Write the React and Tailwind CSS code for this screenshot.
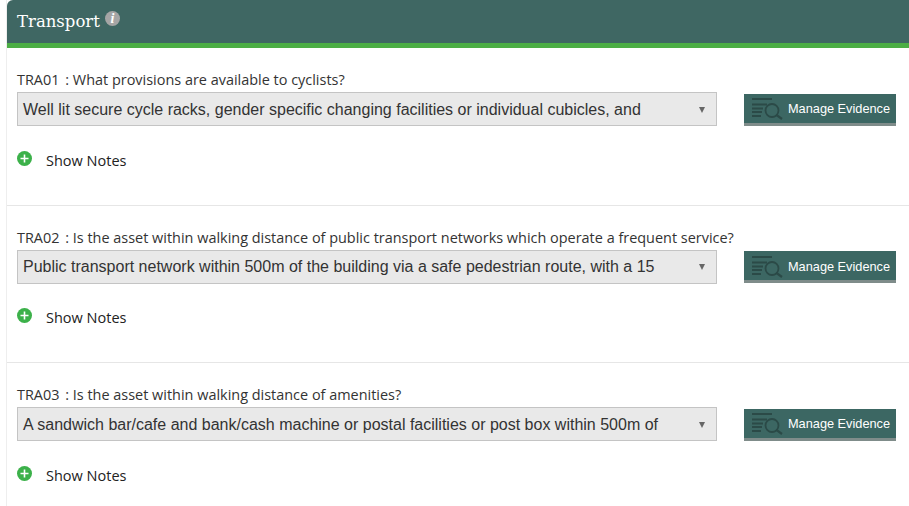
const questions = [
  {
    id: 'TRA01',
    label: 'What provisions are available to cyclists?',
    answer: 'Well lit secure cycle racks, gender specific changing facilities or individual cubicles, and',
  },
  {
    id: 'TRA02',
    label: 'Is the asset within walking distance of public transport networks which operate a frequent service?',
    answer: 'Public transport network within 500m of the building via a safe pedestrian route, with a 15',
  },
  {
    id: 'TRA03',
    label: 'Is the asset within walking distance of amenities?',
    answer: 'A sandwich bar/cafe and bank/cash machine or postal facilities or post box within 500m of',
  },
]

const EvidenceIcon = () => (
  <svg width="32" height="22" viewBox="0 0 32 22" fill="none" stroke="#2b4a47" strokeWidth="1.8" className="shrink-0">
    <path d="M1 1h20M1 6.5h15M1 10.5h11M1 14h10M1 18h9" />
    <circle cx="21" cy="12.5" r="6.5" />
    <path d="M25.5 17l5.5 4" strokeWidth="2.2" />
  </svg>
)

const Question = ({ id, label, answer }) => (
  <div className="h-[157.5px] border-b border-[#e6e6e6] pt-[22px] pl-[10px]">
    <div className="h-[20px] font-['Open_Sans',sans-serif] text-[14.45px] leading-[20px] text-[#333333]">
      {id}<span className="ml-[2px]"> : </span>{label}
    </div>
    <div className="mt-[2px] flex items-start">
      <div className="flex h-[34px] w-[700px] items-center justify-between border border-[#c4c4c4] bg-[#e9e9e9] pt-[1.5px] pr-[11px] pl-[5px] font-['Liberation_Sans',sans-serif] text-[16px] text-[#333333]">
        <span className="whitespace-nowrap">{answer}</span>
        <span className="h-0 w-0 border-x-[3.5px] border-t-[6px] border-x-transparent border-t-[#666666]" />
      </div>
      <button className="mt-[1.75px] ml-[27px] flex h-[32px] w-[152px] items-center border-b-[3px] border-[#7f8c8a] bg-[#3c6763] pt-[1.5px] pl-[7px] font-['Liberation_Sans',sans-serif] text-[12.75px] text-white">
        <EvidenceIcon />
        <span className="ml-[5px] whitespace-nowrap">Manage Evidence</span>
      </button>
    </div>
    <div className="mt-[23.5px] flex items-center font-['Open_Sans',sans-serif] text-[14.5px] text-[#222222]">
      <svg width="15" height="15" viewBox="0 0 15 15" className="mb-[4px]">
        <circle cx="7.5" cy="7.5" r="7.5" fill="#3cb14a" />
        <path d="M7.5 3.5v8M3.5 7.5h8" stroke="#ffffff" strokeWidth="1.6" />
      </svg>
      <span className="ml-[14px]">Show Notes</span>
    </div>
  </div>
)

export default function App() {
  return (
    <div className="h-[506px] w-[909px] overflow-hidden bg-white">
      <div className="ml-[6px] h-full border-l border-[#eeeeee]">
        <div className="flex h-[48px] items-start rounded-tl-[6px] border-b-[5px] border-[#4cae45] bg-[#3f6763] pt-[10px] pl-[10px]">
          <span className="font-['DejaVu_Serif',serif] text-[16.5px] leading-[24px] text-white">Transport</span>
          <span className="mt-[1px] ml-[5px] flex h-[15px] w-[15px] items-center justify-center rounded-full bg-[#a5a5a5] font-['Liberation_Serif',serif] text-[14px] font-bold text-white italic">
            i
          </span>
        </div>
        {questions.map((q) => (
          <Question key={q.id} {...q} />
        ))}
      </div>
    </div>
  )
}
